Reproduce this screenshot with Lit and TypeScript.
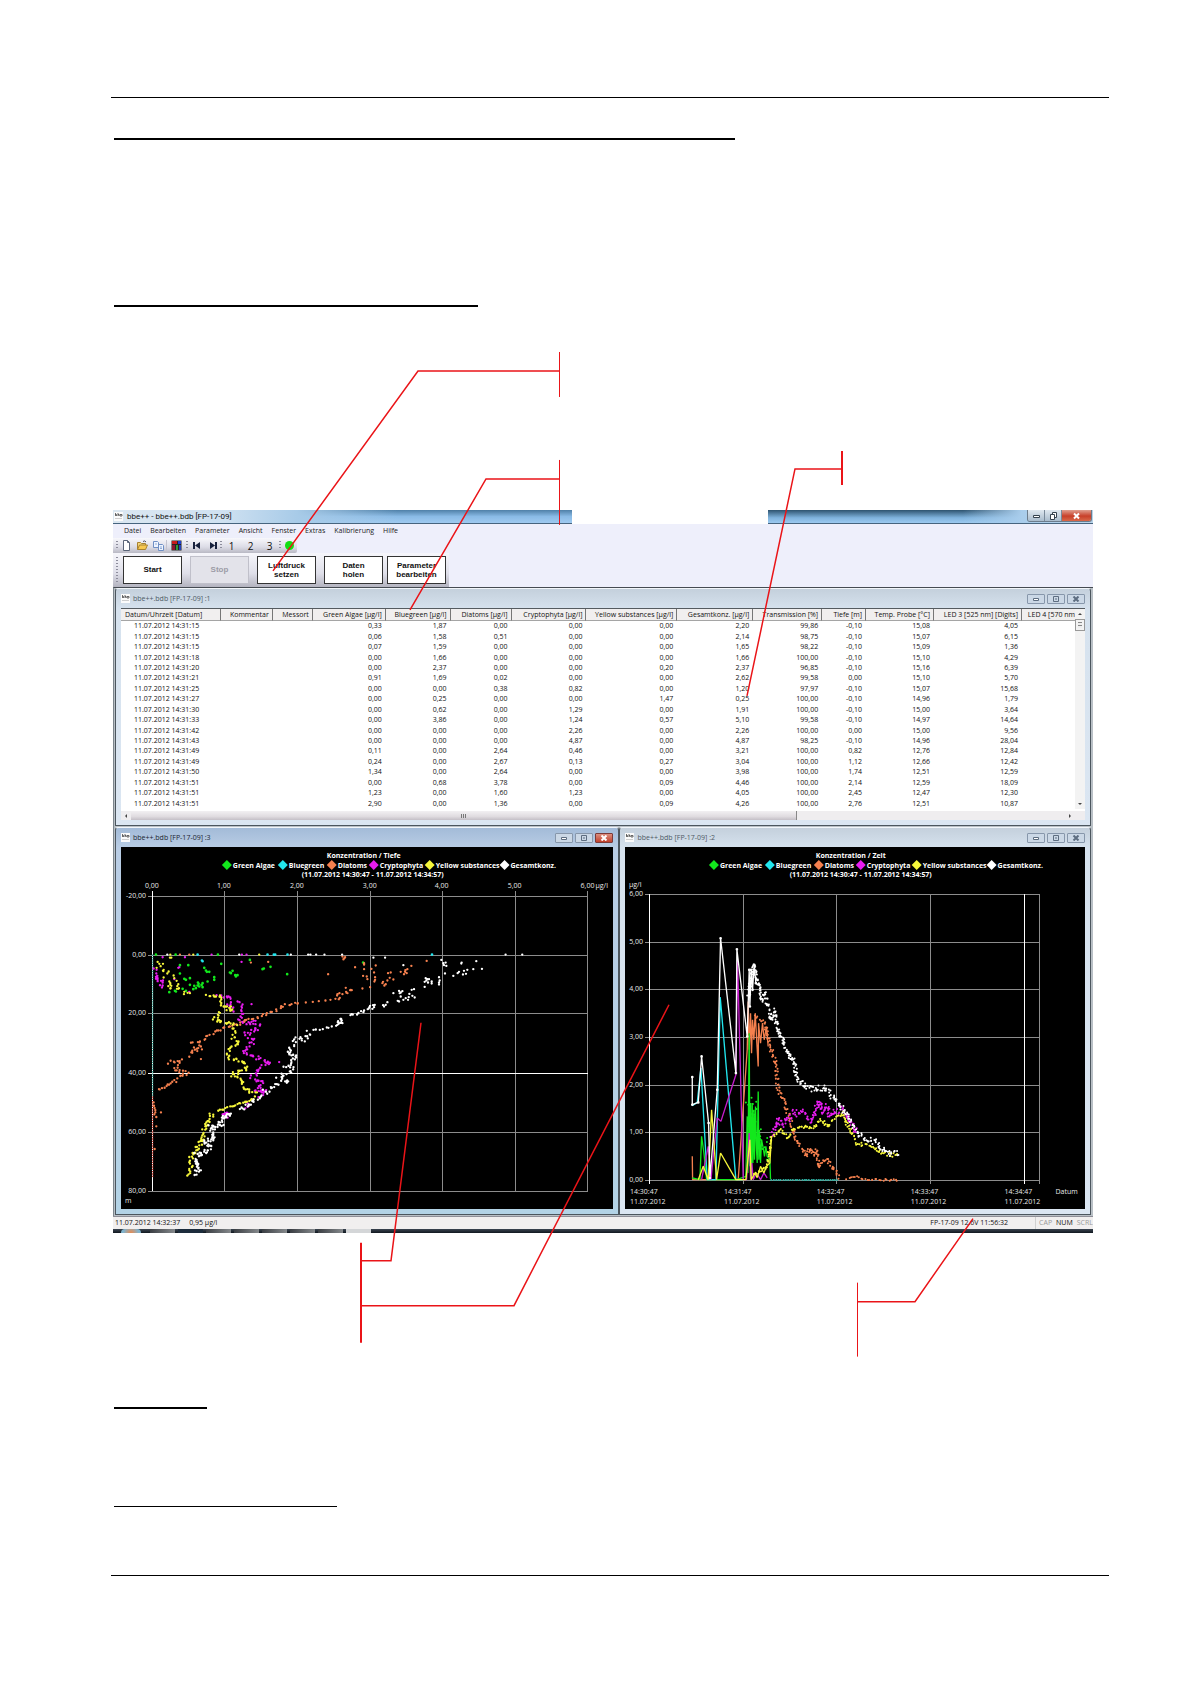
import { LitElement, html, svg, css } from "lit";
import { customElement, property } from "lit/decorators.js";

type Pt = [number, number];

const GREEN = "#12e81c";
const CYAN = "#22e6ee";
const ORANGE = "#f5804e";
const MAGENTA = "#e81cf0";
const YELLOW = "#f6f63a";
const WHITE = "#ffffff";

const LEGEND: [string, string, number][] = [
  ["Green Algae", GREEN, 0],
  ["Bluegreen", CYAN, 56],
  ["Diatoms", ORANGE, 105],
  ["Cryptophyta", MAGENTA, 147],
  ["Yellow substances", YELLOW, 203],
  ["Gesamtkonz.", WHITE, 278],
];

const COLUMNS: [string, number][] = [
  ["Datum/Uhrzeit [Datum]", 100],
  ["Kommentar", 52],
  ["Messort", 40],
  ["Green Algae [µg/l]", 73],
  ["Bluegreen [µg/l]", 65],
  ["Diatoms [µg/l]", 61],
  ["Cryptophyta [µg/l]", 75],
  ["Yellow substances [µg/l]", 91],
  ["Gesamtkonz. [µg/l]", 76],
  ["Transmission [%]", 69],
  ["Tiefe [m]", 44],
  ["Temp. Probe [°C]", 68],
  ["LED 3 [525 nm] [Digits]", 88],
  ["LED 4 [570 nm", 53],
];

const ROWS = `15|0,33|1,87|0,00|0,00|0,00|2,20|99,86|-0,10|15,08|4,05
15|0,06|1,58|0,51|0,00|0,00|2,14|98,75|-0,10|15,07|6,15
15|0,07|1,59|0,00|0,00|0,00|1,65|98,22|-0,10|15,09|1,36
18|0,00|1,66|0,00|0,00|0,00|1,66|100,00|-0,10|15,10|4,29
20|0,00|2,37|0,00|0,00|0,20|2,37|96,85|-0,10|15,16|6,39
21|0,91|1,69|0,02|0,00|0,00|2,62|99,58|0,00|15,10|5,70
25|0,00|0,00|0,38|0,82|0,00|1,20|97,97|-0,10|15,07|15,68
27|0,00|0,25|0,00|0,00|1,47|0,25|100,00|-0,10|14,96|1,79
30|0,00|0,62|0,00|1,29|0,00|1,91|100,00|-0,10|15,00|3,64
33|0,00|3,86|0,00|1,24|0,57|5,10|99,58|-0,10|14,97|14,64
42|0,00|0,00|0,00|2,26|0,00|2,26|100,00|0,00|15,00|9,56
43|0,00|0,00|0,00|4,87|0,00|4,87|98,25|-0,10|14,96|28,04
49|0,11|0,00|2,64|0,46|0,00|3,21|100,00|0,82|12,76|12,84
49|0,24|0,00|2,67|0,13|0,27|3,04|100,00|1,12|12,66|12,42
50|1,34|0,00|2,64|0,00|0,00|3,98|100,00|1,74|12,51|12,59
51|0,00|0,68|3,78|0,00|0,09|4,46|100,00|2,14|12,59|18,09
51|1,23|0,00|1,60|1,23|0,00|4,05|100,00|2,45|12,47|12,30
51|2,90|0,00|1,36|0,00|0,09|4,26|100,00|2,76|12,51|10,87`
  .split("\n")
  .map((line) => {
    const [sec, ...values] = line.split("|");
    return [`11.07.2012 14:31:${sec}`, "", "", ...values, ""];
  });

/* Repeatable noise, so that the curves look the same at every render. */
function noise(seed: number) {
  let s = seed;
  return () => {
    s = (s * 16807) % 2147483647;
    return s / 2147483647 - 0.5;
  };
}

function parse(text: string): Pt[] {
  return text
    .trim()
    .split(/\s+/)
    .map((p) => p.split(",").map(Number) as Pt);
}

/* Walks along way points and scatters samples round the route. */
function along(text: string, step: number, jx: number, jy: number, seed: number): Pt[] {
  const way = parse(text);
  const r = noise(seed);
  const out: Pt[] = [];
  for (let i = 1; i < way.length; i++) {
    const [ax, ay] = way[i - 1];
    const [bx, by] = way[i];
    const n = Math.max(1, Math.round(Math.hypot(bx - ax, by - ay) / step));
    for (let k = 0; k < n; k++) {
      const t = k / n;
      out.push([
        Math.round(ax + (bx - ax) * t + r() * jx),
        Math.round(ay + (by - ay) * t + r() * jy),
      ]);
    }
  }
  return out;
}

const dots = (pts: Pt[], color: string, size = 7) => svg`<path
  d=${pts.map(([x, y]) => `M${x} ${y}h.1`).join("")}
  stroke=${color} stroke-width=${size} stroke-linecap="round" fill="none" />`;

const line = (pts: Pt[], color: string, width = 4) => svg`<path
  d=${"M" + pts.map(([x, y]) => `${x} ${y}`).join("L")}
  stroke=${color} stroke-width=${width} stroke-linejoin="bevel" fill="none" />`;

const DEPTH = {
  green: parse(`150,404 209,404 336,404 222,436 247,436 346,432 432,420 474,446 470,448 494,441 295,444
    300,452 303,456 310,456 222,461 235,477 252,475 240,480 325,472 325,480 305,485 290,490 278,492 270,505 280,500
    290,502 287,495 275,497 252,495 262,508 230,507 210,515 190,517 375,460 372,458 380,453 388,466 395,466
    390,470 544,463 207,513 772,428 265,498 276,488 240,513`),
  cyan: parse(`275,404 485,404 504,404 508,404 545,404 979,404 288,422 290,424`),
  orange: [
    ...parse(`222,404 250,404 716,415 710,410 718,412 713,418 748,442 667,463 775,430 775,434 775,448 783,470 785,478 805,458
      810,437 797,447 772,468 770,506 793,502 806,485 808,480 808,472 830,490 840,493 836,497 832,486 847,460 855,458
      852,474 845,482 863,479 885,456 895,463 899,451 905,448 903,460 898,456 917,438 963,423 435,428 487,426`),
    ...along("745,512 725,508 730,520 700,525 695,536 708,530", 7, 14, 8, 3),
    ...along("690,537 660,541 620,546 580,551", 18, 3, 2, 4),
    ...along("580,551 540,556 515,570 480,583 430,598 400,612 350,625 320,640 285,665 250,675", 7, 10, 9, 5),
    ...along("270,680 255,710 275,690 290,690 275,670", 9, 12, 10, 6),
    ...along("190,727 225,722 205,750 245,758 190,795 150,812", 6, 8, 12, 7),
    ...along("148,850 150,900", 7, 10, 4, 8),
    ...parse("285,718 165,878 151,920 146,988"),
  ],
  magenta: [
    ...parse(`317,404 408,404 422,404 237,412 220,442 217,444 407,426 170,412 205,478 250,516`),
    ...along("148,450 155,478 150,480 165,482 172,490 165,498 155,500", 6, 10, 14, 9),
    ...along("340,527 372,535 368,556 382,570 380,580", 5, 16, 8, 10),
    ...along("402,545 412,575 405,598", 5, 14, 6, 11),
    ...along("405,598 420,615 455,605 455,625 420,640 442,665 415,700 455,715 490,727 450,755 440,775 470,785 450,810 480,812 460,832", 5, 16, 9, 12),
    ...along("430,850 412,868", 6, 10, 7, 13),
    ...along("370,882 350,886 360,895", 3, 22, 10, 14),
    ...parse("437,553 520,727"),
  ],
  yellow: [
    ...parse("193,404 262,404 460,404 192,413 196,413"),
    ...along("165,420 158,450 182,450 178,475 195,490 188,515", 8, 20, 12, 15),
    ...along("212,470 212,490 198,505 232,512 235,520 262,520", 8, 18, 8, 16),
    ...along("305,527 330,527 350,538 345,552 358,558 372,562 382,572 362,575", 5, 10, 8, 17),
    ...along("345,578 328,590 335,600 322,602", 5, 12, 7, 18),
    ...along("340,605 375,610 388,620 380,655 402,672 368,690 370,715 412,725 425,745 378,765 412,785 412,805 450,822 445,838", 5, 13, 8, 19),
    ...along("445,838 400,852 330,876", 6, 5, 5, 20),
    ...along("318,880 312,905 295,925 290,960 270,990 255,1010 250,1070", 4, 14, 7, 21),
  ],
  white: [
    ...parse(`184,404 400,404 555,404 607,404 614,404 631,404 656,404 709,404 1200,404 1250,404 803,413
      838,413 893,436 1007,420 1013,430 1020,428 1022,438 1015,436 1068,428 1067,431 1112,424 1103,448
      1129,447 1085,450 1081,462 1075,453 1072,464 1060,456 1056,460 1043,468 1018,461 1000,472 1002,482
      1000,488 1000,494 978,491 978,485 965,478 960,475 957,486 967,488 970,478 957,501 962,482 925,508 918,510 920,528 927,533
      911,522 909,532 907,540 900,535 890,514 885,518 880,513 882,520 885,530 880,545 876,543 893,540 863,520 845,547 840,555
      835,560 832,556`),
    ...along("808,562 795,555 790,570", 4, 16, 12, 22),
    ...along("780,575 745,582 730,592", 6, 10, 7, 23),
    ...along("712,600 698,608 712,605 700,616", 4, 12, 10, 24),
    ...along("698,616 670,622 640,628 612,634", 9, 6, 5, 25),
    ...along("612,634 595,660 575,652 562,675 545,700 572,712 542,735 562,752 520,770 540,780 510,798 475,818 455,837 430,855 400,875", 5, 18, 13, 26),
    ...along("380,882 350,895 345,915 315,920 325,950 300,965 310,992 275,1005 268,1030 278,1045 268,1068", 3, 20, 10, 27),
  ],
};

const TIME = {
  orangeLine: parse("247,1010 248,1080 300,1080 385,1080 412,690 415,545 418,690 422,580 425,700 428,600 432,660 436,580 441,670 445,740 446,610 452,670 458,610 463,660 470,620 475,680"),
  greenLine: parse(`247,1075 270,1080 275,950 282,1000 290,1080 380,1080 408,1070 412,890 414,1060 418,640 420,1040 422,850 424,1080 427,850
    429,1030 432,870 434,1020 437,860 440,990 442,1030 445,815 447,1020 449,940 452,1030 455,960 460,985 464,1010 468,980 472,1010 480,1020 482,1078`),
  cyanLine: parse("247,858 262,848 273,745 292,1080 318,1080 331,532 378,1080 400,1080"),
  magentaLine: parse("275,1080 295,980 303,1080 322,895 333,905 378,765 383,420 400,1080 410,1080 418,940 422,1080 426,1030 430,1080 440,1060 452,1080 462,1060 472,1075"),
  yellowLine: parse("265,1080 280,1040 295,1080 305,870 320,1080 332,1000 378,1080 408,1080 420,960 424,1080 436,1060 442,1074 452,1040 462,1060 470,1040 480,1030 485,950"),
  whiteLine: parse("247,772 247,855 265,848 275,710 296,910 300,1075 322,810 332,355 378,760 381,388 412,650 418,450 420,560 424,450 428,510 433,435 438,490"),
};

const TIME_DOTS: [Pt[], string][] = [
  [along("485,1081 690,1081", 7, 2, 1, 31), "#2fb3a4"],
  [[...along("440,590 466,610 480,680 495,720 505,810 525,850 540,900 560,960 590,1010 600,985 610,1005 620,990 628,1045 650,1015 680,1060 690,1078", 4, 10, 10, 32), ...along("712,1080 735,1070 760,1080 868,1081", 6, 6, 6, 33)], ORANGE],
  [along("415,850 435,880 445,940 472,1000", 5, 14, 70, 34), GREEN],
  [along("485,950 497,925 505,895 520,915 550,880 580,880 605,905 628,840 640,880 650,860 660,890 690,870 700,870 740,940", 3, 8, 22, 35), MAGENTA],
  [along("435,1060 470,1045 485,950 510,930 535,955 550,925 580,920 610,925 635,900 655,920 670,898 697,880 720,930 740,970 780,980 820,1000 868,1010", 4, 6, 12, 36), YELLOW],
  [along("416,520 422,480 433,440 445,490 455,542 465,520 485,600 495,575 505,635 525,675 540,715 550,710 560,770 575,790 600,805 620,808 640,802 680,840 700,868 720,900 740,935 760,955 800,970 830,1000 868,1000", 3, 9, 18, 37), WHITE],
];

const legend = (x: number) => svg`
  ${LEGEND.map(
    ([name, color, dx]) => svg`
      <path d="M${x + dx - 1} 865l5-5 5 5-5 5z" fill=${color} />
      <text class="b" x=${x + dx + 10} y="868">${name}</text>`,
  )}`;

const chartStyles = css`
  svg.chart {
    display: block;
    width: 100%;
    height: auto;
    background: #000;
  }
  svg.chart text {
    font-family: "Open Sans", "Noto Sans", sans-serif;
    font-size: 7px;
    fill: #e8e8e8;
  }
  svg.chart text.b {
    font-weight: 700;
    fill: #fff;
  }
  .mid {
    text-anchor: middle;
  }
  .end {
    text-anchor: end;
  }
`;

@customElement("depth-chart")
class DepthChart extends LitElement {
  static styles = [
    chartStyles,
    css`
      :host {
        display: block;
      }
    `,
  ];
  render() {
    const xs = [151, 223, 296, 369, 441, 514, 587];
    const ys = [896, 955, 1013, 1073, 1132, 1191];
    return html`<svg class="chart" viewBox="120 847 493 362" role="img" aria-label="Konzentration / Tiefe">
      <text class="b mid" x="363" y="858">Konzentration / Tiefe</text>
      ${legend(222)}
      <text class="b mid" x="372" y="877">(11.07.2012 14:30:47 - 11.07.2012 14:34:57)</text>
      <g stroke="#8c8c8c" stroke-width="1" shape-rendering="crispEdges">
        ${xs.map((x) => svg`<path d="M${x}.5 891V1191" />`)}
        ${ys.map((y) => svg`<path d="M147 ${y}.5H588" />`)}
        <path d="M151.5 891V1191M147 1073.5H588" stroke="#fff" />
      </g>
      ${xs.map((x, i) => svg`<text class="mid" x=${x} y="888">${i},00</text>`)}
      <text x="595" y="888">µg/l</text>
      ${ys.map((y, i) => svg`<text class="end" x="145" y=${y + 2}>${i * 20 - 20},00</text>`)}
      <text x="124" y="1203">m</text>
      <g transform="translate(105 820) scale(.33333)">
        <path d="M140 404V830" stroke="#2f9c8c" stroke-width="4" stroke-dasharray="4 3" />
        <path d="M140 830V1072" stroke="#c23b2e" stroke-width="4" stroke-dasharray="4 3" />
        ${dots(DEPTH.magenta, MAGENTA)} ${dots(DEPTH.green, GREEN, 8)} ${dots(DEPTH.cyan, CYAN, 8)}
        ${dots(DEPTH.orange, ORANGE)} ${dots(DEPTH.yellow, YELLOW)} ${dots(DEPTH.white, WHITE)}
      </g>
    </svg>`;
  }
}

@customElement("time-chart")
class TimeChart extends LitElement {
  static styles = [
    chartStyles,
    css`
      :host {
        display: block;
      }
    `,
  ];
  render() {
    const xs = [649, 743, 836, 930, 1024];
    const ys = [1180, 1132, 1085, 1037, 989, 942, 894];
    return html`<svg class="chart" viewBox="625 847 460 362" role="img" aria-label="Konzentration / Zeit">
      <text class="b mid" x="851" y="858">Konzentration / Zeit</text>
      ${legend(710)}
      <text class="b mid" x="861" y="877">(11.07.2012 14:30:47 - 11.07.2012 14:34:57)</text>
      <g stroke="#8c8c8c" stroke-width="1" shape-rendering="crispEdges">
        ${xs.map((x) => svg`<path d="M${x}.5 894V1184" />`)}
        ${ys.map((y) => svg`<path d="M645 ${y}.5H1040" />`)}
        <path d="M1039.5 894V1184" />
        <path d="M649.5 894V1184M1024.5 894V1184" stroke="#fff" />
      </g>
      <text x="629" y="887">µg/l</text>
      ${ys.map((y, i) => svg`<text class="end" x="643" y=${y + 2}>${i},00</text>`)}
      ${xs.map(
        (x, i) => svg`<text x=${x - 19} y="1194">14:3${i}:47</text><text x=${x - 19} y="1204">11.07.2012</text>`,
      )}
      <text x="1056" y="1194">Datum</text>
      <g transform="translate(610 820) scale(.33333)">
        ${line(TIME.orangeLine, ORANGE, 4)} ${line(TIME.greenLine, GREEN, 4)}
        ${line(TIME.cyanLine, CYAN, 4)} ${line(TIME.magentaLine, "#c51ccc", 4)}
        ${line(TIME.yellowLine, YELLOW, 4)} ${line(TIME.whiteLine, WHITE, 4)}
        ${dots(TIME.whiteLine, WHITE, 8)}
        ${TIME_DOTS.map(([pts, color]) => dots(pts, color, 6))}
      </g>
    </svg>`;
  }
}

@customElement("mdi-window")
class MdiWindow extends LitElement {
  @property() caption = "";
  @property({ type: Boolean, reflect: true }) active = false;

  static styles = css`
    :host {
      display: block;
      box-sizing: border-box;
      min-width: 0;
      padding: 0 5px 5px;
      background: linear-gradient(#c4d0dc, #d6e2ee 20px, #dbe6f2);
      border: 1px solid #4c565e;
      border-top-color: #f2f6fa;
      border-radius: 3px 3px 0 0;
    }
    :host([active]) {
      background: linear-gradient(#a3bbd8, #b9cde5 20px, #b3d3e6);
    }
    header {
      display: flex;
      align-items: center;
      gap: 2px;
      height: 19px;
    }
    .logo {
      width: 9px;
      height: 9px;
    }
    h2 {
      flex: 1;
      margin: 0;
      padding-left: 1px;
      font-size: 7px;
      line-height: 10px;
      font-weight: 400;
      color: #4d5964;
      white-space: nowrap;
    }
    :host([active]) h2 {
      color: #1a2430;
    }
    button {
      box-sizing: border-box;
      display: grid;
      place-items: center;
      width: 18px;
      height: 10px;
      padding: 0;
      border: 1px solid #8797ab;
      border-radius: 1px;
      background: #cbd8e6;
      color: #5d6d80;
    }
    :host([active]) .close {
      background: linear-gradient(#dc8f7f, #c2402c);
      border-color: #7c3a38;
      color: #fff;
    }
    button svg {
      width: 8px;
      height: 6px;
      fill: none;
      stroke: currentColor;
    }
  `;

  render() {
    return html`<header>
        ${appLogo}
        <h2>${this.caption}</h2>
        <button aria-label="Minimieren"><svg viewBox="0 0 8 6"><path d="M1.5 2.5h5v2h-5z" fill="#fff" /></svg></button>
        <button aria-label="Maximieren"><svg viewBox="0 0 8 6"><path d="M1.5.5h5v5h-5zM3 3h2" /></svg></button>
        <button class="close" aria-label="Schließen">
          <svg viewBox="0 0 8 6"><path d="M1.5.5l5 5M6.5.5l-5 5" stroke-width="2" /></svg>
        </button>
      </header>
      <slot></slot>`;
  }
}

const appLogo = html`<svg class="logo" viewBox="0 0 9 9" aria-hidden="true">
  <path d="M0 0h9v9H0z" fill="#fbfbfb" />
  <path d="M1.5 1v3M4 1v3M6 2.5h2v1.500h-2zM1.500 2.500h1v1.500M4 2.500h1v1.500" fill="none" stroke="#4a4a4a" stroke-width=".8" />
  <path d="M1 6.500h7" stroke="#b0b0b0" stroke-width=".6" />
</svg>`;

const MENU = ["Datei", "Bearbeiten", "Parameter", "Ansicht", "Fenster", "Extras", "Kalibrierung", "Hilfe"];

@customElement("app-root")
class AppRoot extends LitElement {
  static styles = css`
    :host {
      display: block;
      box-sizing: border-box;
      min-height: 100vh;
      padding: 97px 81px 108px 111px;
      background: #fff;
      color: #111;
      font-family: "Open Sans", "Noto Sans", sans-serif;
    }
    hr {
      margin: 0;
      border: 0;
      height: 1px;
      background: #000;
    }
    .rule {
      max-width: 100%;
      margin-left: 3px;
      height: 2px;
    }
    .r1 {
      width: 621px;
      margin-top: 40px;
    }
    .r2 {
      width: 364px;
      margin-top: 165px;
    }
    .r3 {
      width: 93px;
      margin-top: 50px;
    }
    .r4 {
      width: 223px;
      height: 1px;
      margin-top: 97px;
    }
    .foot {
      margin-top: 68px;
    }
    figure {
      position: relative;
      margin: 33px 16px 0 2px;
      padding: 170px 0 124px;
    }
    .callouts {
      position: absolute;
      inset: 0;
      width: 100%;
      height: 100%;
      pointer-events: none;
      fill: none;
      stroke: #ea1418;
    }
    button {
      font: inherit;
      color: inherit;
      padding: 0;
      border: 0;
      background: none;
    }
    .titlebar {
      display: grid;
      grid-template-columns: 459fr 196fr 325fr;
      height: 14px;
    }
    .titlebar > div {
      display: flex;
      box-sizing: border-box;
      min-width: 0;
      border-bottom: 1px solid #46647e;
    }
    .tleft {
      align-items: center;
      gap: 4px;
      padding-left: 1px;
      font-family: Roboto, "Open Sans", sans-serif;
      font-size: 8px;
      line-height: 12px;
      white-space: nowrap;
      background: linear-gradient(90deg, #dbe7f1 0, #cfe1f1 24%, #a8cbe8 40%, transparent 62%),
        linear-gradient(#4f80a8, #8abbe6 50%, #9fcaf0);
    }
    .titlebar .blank {
      border-color: transparent;
    }
    .tright {
      justify-content: flex-end;
      background: linear-gradient(90deg, transparent 60%, #a9cdec 78%, #b8d3ea),
        linear-gradient(#2d536f, #7fb3dd 60%, #9ccaf0);
    }
    .logo {
      width: 9px;
      height: 9px;
    }
    .sys {
      display: flex;
      height: 11px;
      margin-right: 1px;
      border: 1px solid #6c7c8c;
      border-top: 0;
      border-radius: 0 0 3px 3px;
      overflow: hidden;
    }
    .sys button {
      display: grid;
      place-items: center;
      width: 17px;
      background: linear-gradient(#dfe8f0, #a9bccd);
      border-right: 1px solid #7a8a9a;
      color: #33414e;
    }
    .sys .close {
      width: 29px;
      border: 0;
      background: linear-gradient(#e0a090, #c8402a 55%, #d8694a);
      color: #fff;
    }
    .sys svg {
      width: 9px;
      height: 8px;
      fill: none;
      stroke: currentColor;
    }
    .bars {
      background: #eeeffb;
    }
    .menu {
      display: flex;
      gap: 9px;
      height: 14px;
      padding-left: 11px;
      font-size: 7px;
      line-height: 14px;
      color: #222;
    }
    .tools {
      display: flex;
      align-items: center;
      box-sizing: border-box;
      width: 184px;
      height: 15px;
      padding-left: 3px;
      background: linear-gradient(#f8f8fc, #dcdce6 60%, #b9b9c4);
      border-radius: 0 2px 2px 0;
    }
    .tools button {
      display: grid;
      place-items: center;
      width: 16px;
      height: 12px;
      font-size: 10px;
      line-height: 12px;
    }
    .tools .wide {
      width: 19px;
    }
    .tools svg {
      width: 11px;
      height: 11px;
    }
    .grip {
      width: 2px;
      height: 9px;
      background: repeating-linear-gradient(#8d8d9c 0 1px, transparent 1px 3px);
    }
    .sep {
      width: 1px;
      height: 11px;
      background: #c4c4d0;
    }
    .big {
      display: flex;
      align-items: center;
      gap: 8px;
      box-sizing: border-box;
      width: 336px;
      height: 34px;
      padding: 0 3px 1px;
      background: linear-gradient(#f6f6fb, #dfdfe9 60%, #b4b4c0);
    }
    .big .grip {
      height: 26px;
      margin-right: -5px;
    }
    .big button {
      box-sizing: border-box;
      flex: 0 0 59px;
      height: 28px;
      border: 1px solid #333;
      background: #fff;
      font-family: "Liberation Sans", sans-serif;
      font-size: 8px;
      line-height: 9px;
      font-weight: 700;
    }
    .big .grip + button {
      margin-left: 2px;
    }
    .big button:disabled {
      border-color: #c0c0ca;
      background: #e3e3ea;
      color: #9c9ca6;
    }
    .big button:last-child {
      margin-left: -4px;
    }
    .mdi {
      padding: 0 2px 1px 1px;
      background: #b9c0c6;
      border-top: 1px solid #454b52;
      border-left: 1px solid #7c858c;
    }
    .pair {
      display: grid;
      grid-template-columns: 505fr 472fr;
      margin-top: 1px;
    }
    .sheet {
      display: flex;
      background: #fff;
      border-top: 1px solid #555b60;
      padding-bottom: 2px;
    }
    .clip {
      flex: 1;
      min-width: 0;
      overflow: hidden;
    }
    table {
      width: 100%;
      height: 200px;
      table-layout: fixed;
      border-collapse: separate;
      border-spacing: 0;
      font-size: 7px;
      line-height: 10px;
      color: #111;
    }
    th,
    td {
      padding: 0 4px 0 0;
      text-align: right;
      font-weight: 400;
      white-space: nowrap;
      overflow: hidden;
    }
    th {
      box-sizing: border-box;
      height: 12px;
      padding-right: 3px;
      background: #f1efef;
      border-right: 1px solid #777;
      border-bottom: 1px solid #a5a5a5;
    }
    th:first-child {
      text-align: left;
      padding-left: 4px;
    }
    th:last-child {
      border-right: 0;
      padding-right: 0;
    }
    td:first-child {
      text-align: left;
      padding-left: 13px;
    }
    .vbar {
      display: flex;
      flex-direction: column;
      justify-content: space-between;
      width: 10px;
      background: #f3f3f3;
    }
    .vbar svg,
    .hbar svg {
      display: block;
      width: 10px;
      height: 9px;
      fill: #444;
    }
    .vthumb {
      box-sizing: border-box;
      height: 12px;
      margin: 1px 0 auto;
      border: 1px solid #999;
      background: repeating-linear-gradient(#eee 0 2px, #888 2px 3px);
      background-clip: content-box;
      padding: 2px;
    }
    .hbar {
      display: flex;
      height: 9px;
      background: #efedef;
    }
    .hthumb {
      flex: 0 0 69%;
      display: grid;
      place-items: center;
      background: linear-gradient(#f2f0f2, #e0dce0 60%, #c4bfc6);
      border-right: 1px solid #888;
    }
    .hthumb i {
      width: 5px;
      height: 4px;
      background: repeating-linear-gradient(90deg, #777 0 1px, transparent 1px 2px);
    }
    .hbar .right {
      margin-left: auto;
      margin-right: 10px;
    }
    .status {
      display: flex;
      align-items: center;
      gap: 9px;
      height: 12px;
      padding: 0 0 0 2px;
      border-top: 1px solid #8f8f98;
      background: #f1efef;
      font-size: 7px;
      line-height: 12px;
      white-space: nowrap;
      overflow: hidden;
    }
    .status .dev {
      margin-left: auto;
      margin-right: 18px;
    }
    .status .off {
      color: #999;
    }
    .status .keys {
      display: flex;
      gap: 4px;
      padding-left: 3px;
      border-left: 1px solid #d0d0d0;
    }
    .task {
      display: flex;
      gap: 3px;
      height: 4px;
      padding-left: 8px;
      overflow: hidden;
      background: linear-gradient(#3a4450, #10181f);
    }
    .task b {
      width: 25px;
      background: linear-gradient(90deg, #3a3e43, #85898c);
    }
    .task .orb {
      width: 20px;
      margin-right: 6px;
      border-radius: 10px 10px 0 0;
      background: radial-gradient(circle at 50% 100%, #e88a50, #7fb2cc 70%);
    }
    .task .dim {
      background: #1c2c3c;
    }
    .task .lit {
      background: #d4d6d8;
    }
  `;

  private toolbar() {
    return html`<div class="tools" role="toolbar" aria-label="Standard">
      <span class="grip"></span>
      <button aria-label="Neu">
        <svg viewBox="0 0 11 11"><path d="M2.500.5h4l2 2v8h-6zM6.500.5v2h2" fill="#fff" stroke="#5a6478" /></svg>
      </button>
      <button aria-label="Öffnen">
        <svg viewBox="0 0 11 11">
          <path d="M.5 9.500v-7h3l1 1h4v1.500" fill="#f4d77c" stroke="#a98230" />
          <path d="M.5 9.500l2-4.500h8l-2 4.500z" fill="#f7c850" stroke="#a98230" />
          <path d="M6 1.500q2-1.500 3 .5" fill="none" stroke="#556" />
        </svg>
      </button>
      <button aria-label="Kopieren">
        <svg viewBox="0 0 11 11">
          <path d="M.5 1.500h4l1 1v5h-5zM5.500 4.500h4l1 1v5h-5z" fill="#eef4ff" stroke="#6f8fc4" />
          <path d="M7 7h2M7 8.500h2M2 4h2" stroke="#6f8fc4" stroke-width=".7" />
        </svg>
      </button>
      <span class="sep"></span>
      <button class="wide" aria-label="Farben">
        <svg viewBox="0 0 11 11">
          <path d="M.5.5h10v10H.5z" fill="#222" />
          <path d="M1 1h5v3H1z" fill="#c81c1c" /><path d="M7 1h3v3H7z" fill="#1e3fd0" />
          <path d="M1 5h3v5H1z" fill="#8b1830" /><path d="M5 5h2v5H5z" fill="#2f9a38" /><path d="M8 5h2v5H8z" fill="#2440b8" />
        </svg>
      </button>
      <span class="grip"></span>
      <button aria-label="Zum Anfang">
        <svg viewBox="0 0 11 11"><path d="M2 2h2v7H2zM9 2v7L4 5.500z" fill="#16203c" /></svg>
      </button>
      <button aria-label="Zum Ende">
        <svg viewBox="0 0 11 11"><path d="M8 2h2v7H8zM3 2v7l5-3.500z" fill="#16203c" /></svg>
      </button>
      <span class="grip"></span>
      <button class="wide">1</button><button class="wide">2</button><button class="wide">3</button>
      <span class="grip"></span>
      <button aria-label="Verbindung">
        <svg viewBox="0 0 11 11"><circle cx="5.500" cy="5.500" r="4.500" fill="#12e012" /></svg>
      </button>
    </div>`;
  }

  render() {
    return html`
      <hr />
      <hr class="rule r1" />
      <hr class="rule r2" />
      <figure>
        <div class="titlebar">
          <div class="tleft">${appLogo}<span>bbe++ - bbe++.bdb [FP-17-09]</span></div>
          <div class="blank"></div>
          <div class="tright">
            <span class="sys">
              <button aria-label="Minimieren"><svg viewBox="0 0 9 8"><path d="M1.500 3.500h6v2h-6z" fill="#fff" /></svg></button>
              <button aria-label="Wiederherstellen">
                <svg viewBox="0 0 9 8"><path d="M3.500 2.500v-2h4v5h-2M1.500 2.500h4v5h-4z" fill="#fff" /></svg>
              </button>
              <button class="close" aria-label="Schließen">
                <svg viewBox="0 0 9 8"><path d="M2 1.500l5 5M7 1.500l-5 5" stroke-width="2" /></svg>
              </button>
            </span>
          </div>
        </div>
        <div class="bars">
          <nav class="menu">${MENU.map((m) => html`<button>${m}</button>`)}</nav>
          ${this.toolbar()}
          <div class="big">
            <span class="grip"></span>
            <button>Start</button>
            <button disabled>Stop</button>
            <button>Luftdruck<br />setzen</button>
            <button>Daten<br />holen</button>
            <button>Parameter<br />bearbeiten</button>
          </div>
        </div>
        <div class="mdi">
          <mdi-window caption="bbe++.bdb [FP-17-09] :1">
            <div class="sheet">
              <div class="clip">
                <table>
                  <colgroup>
                    ${COLUMNS.map(([, w]) => html`<col style="width:${(w / 955) * 100}%" />`)}
                  </colgroup>
                  <thead>
                    <tr>
                      ${COLUMNS.map(([name]) => html`<th scope="col">${name}</th>`)}
                    </tr>
                  </thead>
                  <tbody>
                    ${ROWS.map((row) => html`<tr>${row.map((v) => html`<td>${v}</td>`)}</tr>`)}
                  </tbody>
                </table>
              </div>
              <div class="vbar">
                <svg viewBox="0 0 10 9"><path d="M3 6l2-2 2 2z" /></svg>
                <div class="vthumb"></div>
                <svg viewBox="0 0 10 9"><path d="M3 3l2 2 2-2z" /></svg>
              </div>
            </div>
            <div class="hbar">
              <svg viewBox="0 0 10 9"><path d="M6 3L4 5l2 2z" /></svg>
              <div class="hthumb"><i></i></div>
              <svg class="right" viewBox="0 0 10 9"><path d="M4 3l2 2-2 2z" /></svg>
            </div>
          </mdi-window>
          <div class="pair">
            <mdi-window active caption="bbe++.bdb [FP-17-09] :3"><depth-chart></depth-chart></mdi-window>
            <mdi-window caption="bbe++.bdb [FP-17-09] :2"><time-chart></time-chart></mdi-window>
          </div>
        </div>
        <div class="status">
          <span>11.07.2012 14:32:37</span>
          <span>0,95 µg/l</span>
          <span class="dev">FP-17-09 12.6V 11:56:32</span>
          <span class="keys"><span class="off">CAP</span><span>NUM</span><span class="off">SCRL</span></span>
        </div>
        <div class="task">
          <b class="orb"></b><b></b><b class="dim"></b><b></b><b></b><b></b><b></b><b></b><b class="lit"></b>
        </div>
        <svg class="callouts" viewBox="113 340 980 1017" preserveAspectRatio="none" aria-hidden="true">
          <path d="M559.500 352v45M559.500 460v65M857.500 1283v74" />
          <path d="M842 451v34M361 1243v100" stroke-width="2" />
          <path
            stroke-width="1.500"
            d="M559 371H418L273 571M559 479H486L410 610M842 469H795L747 696M361 1261H391L421 1023M361 1306H514L669 1005M857 1302H915L973 1219"
          />
        </svg>
      </figure>
      <hr class="rule r3" />
      <hr class="rule r4" />
      <hr class="foot" />
    `;
  }
}
